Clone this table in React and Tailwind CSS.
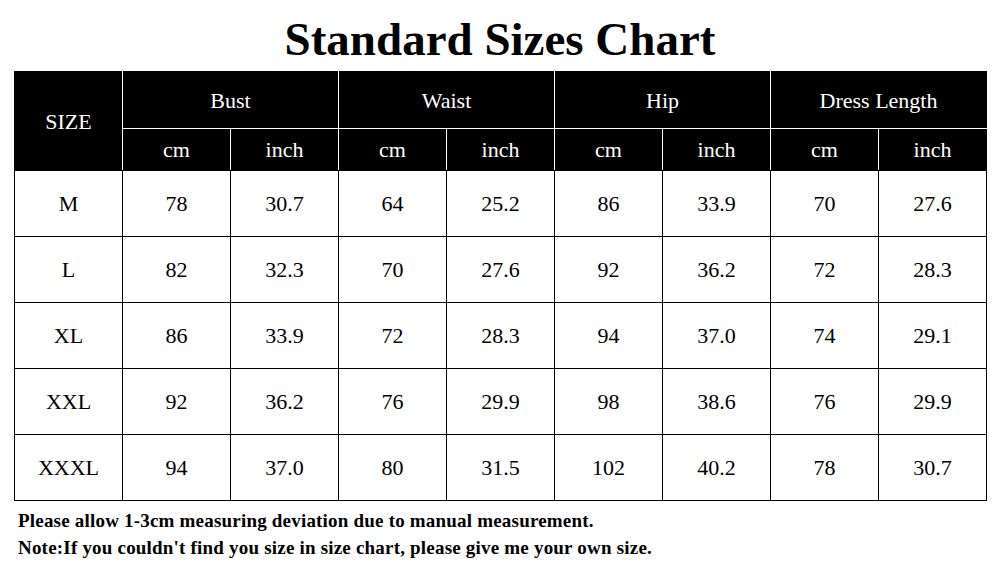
const groups = ["Bust", "Waist", "Hip", "Dress Length"]

const rows = [
  ["M", "78", "30.7", "64", "25.2", "86", "33.9", "70", "27.6"],
  ["L", "82", "32.3", "70", "27.6", "92", "36.2", "72", "28.3"],
  ["XL", "86", "33.9", "72", "28.3", "94", "37.0", "74", "29.1"],
  ["XXL", "92", "36.2", "76", "29.9", "98", "38.6", "76", "29.9"],
  ["XXXL", "94", "37.0", "80", "31.5", "102", "40.2", "78", "30.7"],
]

export default function App() {
  return (
    <div className="w-[1000px] h-[573px] bg-white text-black font-['Liberation_Serif',serif] overflow-hidden">
      <h1 className="h-[71px] pt-[13px] text-center text-[47px] leading-[52px] font-bold">
        Standard Sizes Chart
      </h1>

      <table className="ml-[14px] border-collapse table-fixed text-[22px]">
        <colgroup>
          {Array.from({ length: 9 }).map((_, i) => (
            <col key={i} className="w-[108px]" />
          ))}
        </colgroup>
        <thead className="bg-black text-white">
          <tr className="h-[57px]">
            <th rowSpan={2} className="font-normal border border-black border-r-white">
              SIZE
            </th>
            {groups.map((g) => (
              <th key={g} colSpan={2} className="font-normal border border-white border-t-black last:border-r-black">
                {g}
              </th>
            ))}
          </tr>
          <tr className="h-[42px]">
            {groups.map((g) => [
              <th key={g + "cm"} className="font-normal border border-white border-b-black">cm</th>,
              <th key={g + "in"} className="font-normal border border-white border-b-black last:border-r-black">inch</th>,
            ])}
          </tr>
        </thead>
        <tbody>
          {rows.map((r) => (
            <tr key={r[0]} className="h-[66px]">
              {r.map((v, i) => (
                <td key={i} className="border border-black text-center">{v}</td>
              ))}
            </tr>
          ))}
        </tbody>
      </table>

      <div className="pl-[18px] pt-[6px] text-[19px] leading-[27px] font-bold tracking-[0.2px]">
        <p>Please allow 1-3cm measuring deviation due to manual measurement.</p>
        <p>Note:If you couldn't find you size in size chart, please give me your own size.</p>
      </div>
    </div>
  )
}
